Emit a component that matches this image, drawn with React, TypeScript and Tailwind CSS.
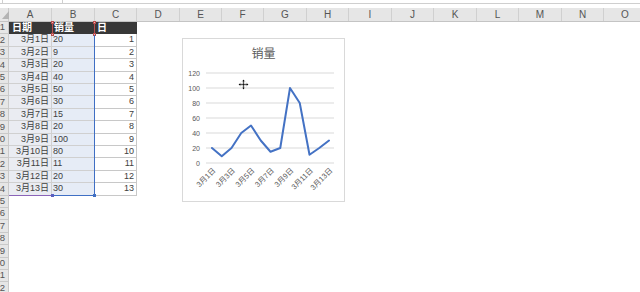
import React from 'react'

const COLS = [
  { name: 'A', w: 'w-[43px]' },
  { name: 'B', w: 'w-[43px]' },
  { name: 'C', w: 'w-[42px]' },
  { name: 'D', w: 'w-[43px]' },
  { name: 'E', w: 'w-[42px]' },
  { name: 'F', w: 'w-[42px]' },
  { name: 'G', w: 'w-[43px]' },
  { name: 'H', w: 'w-[42px]' },
  { name: 'I', w: 'w-[43px]' },
  { name: 'J', w: 'w-[42px]' },
  { name: 'K', w: 'w-[43px]' },
  { name: 'L', w: 'w-[42px]' },
  { name: 'M', w: 'w-[43px]' },
  { name: 'N', w: 'w-[42px]' },
  { name: 'O', w: 'w-[43px]' },
]

const SALES = [20, 9, 20, 40, 50, 30, 15, 20, 100, 80, 11, 20, 30]

// row heights average 12.4px
const ROW_H = [12, 13, 12, 13, 12, 12, 13, 12, 13, 12, 12, 13, 12, 13, 12, 12, 13, 12, 13, 12, 12, 13]

function RowHeader({ n }: { n: number }) {
  return (
    <div className="flex w-[9px] shrink-0 items-center justify-end overflow-hidden border-r border-b border-[#c9c9c9] bg-[#e6e6e6] pr-[3px] text-[9.5px] text-[#555]">
      <span>{n}</span>
    </div>
  )
}

function DataRow({ idx }: { idx: number }) {
  const n = idx + 1
  const h = ROW_H[idx] === 12 ? 'h-[12px]' : 'h-[13px]'

  if (n === 1) {
    return (
      <div className={`flex ${h}`}>
        <RowHeader n={n} />
        <div className="flex w-[128px] bg-[#383838] text-[10px] font-bold leading-none text-white">
          <div className="flex w-[43px] items-center pl-[3px]">日期</div>
          <div className="flex w-[43px] items-center pl-[2px]">销量</div>
          <div className="flex w-[42px] items-center pl-[2px]">日</div>
        </div>
      </div>
    )
  }

  if (n <= 14) {
    const i = n - 2
    return (
      <div className={`flex ${h}`}>
        <RowHeader n={n} />
        <div className="flex w-[43px] items-center justify-end border-r border-b border-[#d0d0d0] bg-[#eaecf2] pr-[2px] text-[9px] text-[#404040]">
          3月{i + 1}日
        </div>
        <div className="flex w-[43px] items-center border-b border-[#d0d0d0] bg-[#e6ecf6] pl-[1px] text-[9px] text-[#404040]">
          {SALES[i]}
        </div>
        <div className="flex w-[42px] items-center justify-end border-r border-b border-[#c8c8c8] pr-[2px] text-[9px] text-[#404040]">
          {i + 1}
        </div>
      </div>
    )
  }

  return (
    <div className={`flex ${h}`}>
      <RowHeader n={n} />
    </div>
  )
}

function Chart() {
  const off = 28
  const x0 = 29
  const dx = 9.75
  const yOf = (v: number) => 124 - v * 0.75 - off
  const pts = SALES.map((v, i) => `${x0 + i * dx},${yOf(v)}`).join(' ')
  const ticks = [0, 20, 40, 60, 80, 100, 120]

  return (
    <div className="absolute left-[182px] top-[38px] h-[164px] w-[163px] border border-[#d9d9d9] bg-white">
      <div className="flex h-[28px] items-center justify-center pt-[2px] text-[12px] text-[#595959]">销量</div>
      <svg width="161" height="134" className="block">
        {ticks.map((t) => (
          <g key={t}>
            <line x1="23" x2="151" y1={yOf(t)} y2={yOf(t)} stroke="#d9d9d9" strokeWidth="1" />
            <text x="17" y={yOf(t) + 2.5} textAnchor="end" fontSize="7" fill="#595959" fontFamily="Liberation Sans, sans-serif">
              {t}
            </text>
          </g>
        ))}
        <polyline points={pts} fill="none" stroke="#4472c4" strokeWidth="2" strokeLinejoin="round" strokeLinecap="round" />
        {SALES.map((_, i) =>
          i % 2 === 0 ? (
            <text
              key={i}
              x={x0 + i * dx + 4}
              y={132 - off}
              textAnchor="end"
              fontSize="7.5"
              fill="#595959"
              fontFamily="Liberation Sans, Noto Sans CJK SC, sans-serif"
              transform={`rotate(-45 ${x0 + i * dx + 4} ${132 - off})`}
            >
              3月{i + 1}日
            </text>
          ) : null,
        )}
      </svg>
    </div>
  )
}

function Handle({ className }: { className: string }) {
  return <div className={`absolute h-[3px] w-[3px] ${className}`} />
}

export default function App() {
  return (
    <div className="relative h-[292px] w-[640px] overflow-hidden bg-white font-['Liberation_Sans','Noto_Sans_CJK_SC',sans-serif]">
      {/* formula bar edge */}
      <div className="h-[8px]">
        <div className="flex h-[4px] border-b border-[#cfcfcf]">
          <div className="ml-[2px] w-[61px] border-x border-[#cfcfcf]" />
        </div>
      </div>

      {/* column headers */}
      <div className="flex h-[14px] border-b border-[#c4c4c4] bg-[#e6e6e6] text-[10px] text-[#555]">
        <div className="relative w-[9px] shrink-0 border-r border-[#c9c9c9]">
          <svg width="7" height="9" className="absolute left-[2px] top-[3px]">
            <polygon points="7,0 7,8 0,8" fill="#b4b4b4" />
          </svg>
        </div>
        {COLS.map((c) => (
          <div key={c.name} className={`flex ${c.w} shrink-0 items-center justify-center border-r border-[#d0d0d0]`}>
            {c.name}
          </div>
        ))}
      </div>

      {/* rows */}
      {ROW_H.map((_, i) => (
        <DataRow key={i} idx={i} />
      ))}

      {/* chart source range outlines */}
      <div className="absolute left-[52px] top-[22px] h-[13px] w-[43px] border-x border-[#b84c4c]" />
      <Handle className="left-[51px] top-[21px] border border-[#b84c4c] bg-[#f2b8b8]" />
      <Handle className="left-[93px] top-[21px] border border-[#b84c4c] bg-[#f2b8b8]" />
      <Handle className="left-[51px] top-[33px] border border-[#b84c4c] bg-[#f2b8b8]" />
      <Handle className="left-[93px] top-[33px] border border-[#b84c4c] bg-[#f2b8b8]" />
      <div className="absolute left-[52px] top-[35px] h-[161px] w-[43px] border-r border-b border-[#3f6fc4]" />
      <div className="absolute left-[9px] top-[195px] h-[1px] w-[43px] bg-[#8a63b8]" />
      <Handle className="left-[51px] top-[194px] bg-[#5a5fc0]" />
      <Handle className="left-[93px] top-[194px] bg-[#3f6fc4]" />

      <Chart />

      {/* move cursor */}
      <svg width="11" height="11" viewBox="0 0 11 11" className="absolute left-[238px] top-[79px]">
        <path d="M5.5 0.5 L7.5 2.5 H6.2 V4.8 H8.5 V3.5 L10.5 5.5 L8.5 7.5 V6.2 H6.2 V8.5 H7.5 L5.5 10.5 L3.5 8.5 H4.8 V6.2 H2.5 V7.5 L0.5 5.5 L2.5 3.5 V4.8 H4.8 V2.5 H3.5 Z" fill="#111" stroke="#fff" strokeWidth="0.6" />
      </svg>
    </div>
  )
}
